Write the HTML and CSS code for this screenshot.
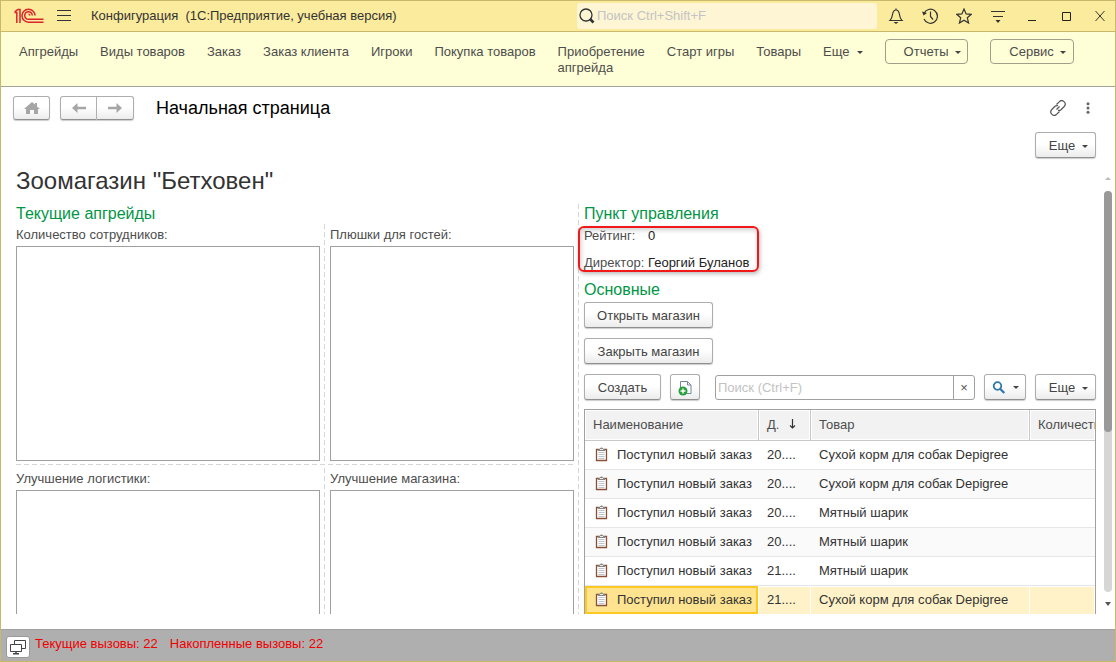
FILE: index.html
```html
<!DOCTYPE html>
<html lang="ru">
<head>
<meta charset="utf-8">
<title>Конфигурация</title>
<link rel="stylesheet" href="styles.css">
</head>
<body>
<div class="window">
  <header class="titlebar">
    <svg class="logo" width="30" height="16" viewBox="0 0 30 16" fill="none" stroke="#d9252b" stroke-width="1.500"><path d="M.5 4.500h2.300V15M.8 3.800L3.800 1.500H6V15"/><path d="M21 7.500A6.500 6.500 0 1 0 14.500 14.200H29.500"/><path d="M18.300 7.500A3.800 3.800 0 1 0 14.500 11.300H29.500"/><path d="M15.800 7.500a1.300 1.300 0 0 0-1.300-1.200"/></svg>
    <button class="icon-btn menu-btn" aria-label="Главное меню"><svg width="14" height="12" viewBox="0 0 14 12" stroke="#333" fill="none"><path d="M0 .5h14M0 5.500h14M0 10.500h14"/></svg></button>
    <span class="app-title">Конфигурация &nbsp;(1С:Предприятие, учебная версия)</span>
    <div class="global-search">
      <svg width="16" height="16" viewBox="0 0 16 16" fill="none" stroke="#333"><circle cx="7" cy="7" r="6" stroke-width="1.300"/><path d="M11 11l3.500 3.500" stroke-width="2.600"/></svg>
      <input type="text" aria-label="Поиск" placeholder="Поиск Ctrl+Shift+F">
    </div>
    <div class="tools">
      <button class="icon-btn" aria-label="Уведомления"><svg width="16" height="16" viewBox="0 0 16 16" fill="none" stroke="#333" stroke-width="1.200"><path d="M8 .5v1.500M2 12.500h12c-2-2-2-3-2.500-6C11 3.500 10 2 8 2S5 3.500 4.500 6.500C4 9.500 4 10.500 2 12.500z"/><path d="M5.500 14h5L8 16z" fill="#333" stroke="none"/></svg></button>
      <button class="icon-btn" aria-label="История"><svg width="16" height="16" viewBox="0 0 16 16" fill="none" stroke="#333" stroke-width="1.200"><path d="M2 5.500A7 7 0 1 1 2 11M8.500 3.500v5l2.500 3"/><path d="M0 3.500l1.500 4L5 5z" fill="#333" stroke="none"/></svg></button>
      <button class="icon-btn" aria-label="Избранное"><svg width="16" height="16" viewBox="0 0 16 16" fill="none" stroke="#333" stroke-width="1.200"><path d="M8 1l2.100 4.900 5.200.4-4 3.500 1.300 5.200L8 12.200 3.400 15l1.300-5.200-4-3.500 5.200-.4z"/></svg></button>
      <button class="icon-btn" aria-label="Настройка"><svg width="16" height="16" viewBox="0 0 16 16" fill="none" stroke="#333" stroke-width="1.200"><path d="M1 3.500h14M3 8.500h10"/><path d="M5.500 12h5L8 15z" fill="#333" stroke="none"/></svg></button>
      <button class="icon-btn" aria-label="Свернуть"><svg width="16" height="16" viewBox="0 0 16 16" stroke="#222" fill="none"><path d="M4 12.500h8"/></svg></button>
      <button class="icon-btn" aria-label="Развернуть"><svg width="16" height="16" viewBox="0 0 16 16" stroke="#222" fill="none"><path d="M4.500 4.500h8v8h-8z"/></svg></button>
      <button class="icon-btn" aria-label="Закрыть"><svg width="16" height="16" viewBox="0 0 16 16" stroke="#333" fill="none"><path d="M3.500 3l9 10M12.500 3l-9 10"/></svg></button>
    </div>
  </header>

  <nav class="sections">
    <a href="#">Апгрейды</a>
    <a href="#">Виды товаров</a>
    <a href="#">Заказ</a>
    <a href="#">Заказ клиента</a>
    <a href="#">Игроки</a>
    <a href="#">Покупка товаров</a>
    <a href="#">Приобретение<br>апгрейда</a>
    <a href="#">Старт игры</a>
    <a href="#">Товары</a>
    <button class="nav-more">Еще<i class="caret"></i></button>
    <button class="nav-menu">Отчеты<i class="caret"></i></button>
    <button class="nav-menu nav-menu-last">Сервис<i class="caret"></i></button>
  </nav>

  <div class="page-head">
    <button class="btn home" aria-label="Начальная страница"><svg width="16" height="14" viewBox="0 0 16 14" fill="#a6a6a6"><path d="M8 1L0 8h2v5h4V9h4v4h4V8h2l-3-2.600V2h-2v1.600z"/></svg></button>
    <div class="history">
      <button class="btn" aria-label="Назад"><svg width="16" height="12" viewBox="0 0 16 12" fill="#a6a6a6"><path d="M1 6l5.500-5v3.800H15v2.400H6.500V11z"/></svg></button>
      <button class="btn" aria-label="Вперед"><svg width="16" height="12" viewBox="0 0 16 12" fill="#a6a6a6"><path d="M15 6L9.500 1v3.800H1v2.400h8.500V11z"/></svg></button>
    </div>
    <h1>Начальная страница</h1>
    <button class="icon-btn link-btn" aria-label="Ссылка"><svg width="16" height="16" viewBox="0 0 16 16" fill="none" stroke="#555" stroke-width="1.200"><path d="M6.500 4.500l2.700-2.700a3.300 3.300 0 0 1 5 4.700L11 9.700c-1 .8-2 .9-3 .5M9.500 11.500l-2.700 2.700a3.300 3.300 0 0 1-5-4.700L5 6.300c1-.8 2-.9 3-.5M6.500 9.500l3-3"/></svg></button>
    <button class="icon-btn dots-btn" aria-label="Дополнительно"><svg width="4" height="12" viewBox="0 0 4 12" fill="#666"><circle cx="2" cy="1.700" r="1.500"/><circle cx="2" cy="6" r="1.500"/><circle cx="2" cy="10.300" r="1.500"/></svg></button>
  </div>
  <div class="commands"><button class="btn more">Еще<i class="caret"></i></button></div>

  <div class="viewport">
    <main class="content">
      <h2>Зоомагазин "Бетховен"</h2>
      <div class="columns">
        <section class="upgrades">
          <h3>Текущие апгрейды</h3>
          <div class="upgrade-row">
            <div class="field wide"><label for="staff">Количество сотрудников:</label><textarea id="staff"></textarea></div>
            <div class="field"><label for="bonus">Плюшки для гостей:</label><textarea id="bonus"></textarea></div>
          </div>
          <div class="row-divider"></div>
          <div class="upgrade-row">
            <div class="field wide"><label for="logistics">Улучшение логистики:</label><textarea id="logistics"></textarea></div>
            <div class="field"><label for="shop">Улучшение магазина:</label><textarea id="shop"></textarea></div>
          </div>
        </section>
        <section class="control">
          <h3>Пункт управления</h3>
          <dl class="facts">
            <dt>Рейтинг:</dt><dd>0</dd>
            <dt>Директор:</dt><dd>Георгий Буланов</dd>
          </dl>
          <h3>Основные</h3>
          <div class="actions">
            <button class="btn">Открыть магазин</button>
            <button class="btn">Закрыть магазин</button>
          </div>
          <div class="list-bar">
            <button class="btn create">Создать</button>
            <button class="btn copy" aria-label="Скопировать"><svg width="14" height="16" viewBox="0 0 14 16" fill="none"><path d="M2.500 9V1.500h7l3.500 3.500v8.500H8" fill="#fff" stroke="#75879b"/><path d="M9.500 1.500V5H13" stroke="#75879b"/><circle cx="5" cy="11" r="4.500" fill="#28a03c"/><path d="M2.500 11h5M5 8.500v5" stroke="#fff" stroke-width="1.400"/></svg></button>
            <div class="list-search">
              <input type="text" aria-label="Поиск в списке" placeholder="Поиск (Ctrl+F)">
              <button aria-label="Очистить">×</button>
            </div>
            <button class="btn find" aria-label="Найти"><svg width="14" height="14" viewBox="0 0 14 14" fill="none" stroke="#3178ad"><circle cx="5.500" cy="5" r="3.800" stroke-width="1.800"/><path d="M8.300 8l4 4" stroke-width="2.300"/></svg><i class="caret"></i></button>
            <button class="btn more">Еще<i class="caret"></i></button>
          </div>
          <div class="table-box">
            <table>
              <colgroup><col class="c-name"><col class="c-date"><col class="c-goods"><col></colgroup>
              <thead><tr><th>Наименование</th><th>Д. <svg class="sort" width="7" height="10" viewBox="0 0 7 10" fill="none" stroke="#333" stroke-width="1.200"><path d="M3.500 0v9M1 6.500L3.500 9 6 6.500"/></svg></th><th>Товар</th><th>Количество</th></tr></thead>
              <tbody>
                <tr><td><svg class="doc"><use href="#clip"/></svg>Поступил новый заказ</td><td>20....</td><td>Сухой корм для собак Depigree</td><td></td></tr>
                <tr><td><svg class="doc"><use href="#clip"/></svg>Поступил новый заказ</td><td>20....</td><td>Сухой корм для собак Depigree</td><td></td></tr>
                <tr><td><svg class="doc"><use href="#clip"/></svg>Поступил новый заказ</td><td>20....</td><td>Мятный шарик</td><td></td></tr>
                <tr><td><svg class="doc"><use href="#clip"/></svg>Поступил новый заказ</td><td>20....</td><td>Мятный шарик</td><td></td></tr>
                <tr><td><svg class="doc"><use href="#clip"/></svg>Поступил новый заказ</td><td>21....</td><td>Мятный шарик</td><td></td></tr>
                <tr class="selected"><td><svg class="doc"><use href="#clip"/></svg>Поступил новый заказ</td><td>21....</td><td>Сухой корм для собак Depigree</td><td></td></tr>
              </tbody>
            </table>
          </div>
        </section>
      </div>
    </main>
    <div class="scrollbar"><i class="up"></i><div class="track"><div class="thumb"></div></div><i class="down"></i></div>
  </div>

  <footer class="status">
    <button class="windows-btn" aria-label="Окна"><svg width="18" height="16" viewBox="0 0 18 16" fill="#fff" stroke="#444"><path d="M5.500 1.500h11v8h-11z"/><path d="M1.500 5.500h11v7h-11z"/><path d="M7 12.500V15M4 14.700h6" stroke-width="1.500"/></svg></button>
    <span>Текущие вызовы: 22</span><span>Накопленные вызовы: 22</span>
  </footer>
</div>
<svg class="defs" width="0" height="0"><symbol id="clip" viewBox="0 0 13 15"><path d="M1.500 2.500h10v11h-10z" fill="#fff" stroke="#8a4f35" stroke-width="1.300"/><path d="M3.500 5.500h6M3.500 7.500h6M3.500 9.500h6M3.500 11.500h6" stroke="#bcc5cf"/><path d="M3 4V2h2c0-2 3-2 3 0h2v2z" fill="#858585"/><path d="M5 2.500h3" stroke="#eee"/></symbol></svg>
</body>
</html>
```

FILE: styles.css
```css
* { box-sizing: border-box; }
body { margin: 0; font: 13px/16px "Liberation Sans", Arial, sans-serif; color: #333; }
button, input, textarea { font: inherit; color: inherit; margin: 0; }
button { padding: 0; border: 0; background: none; white-space: nowrap; }
svg { display: block; flex: none; }
h1, h2, h3, dl, dd { margin: 0; font-weight: normal; }
.defs { position: absolute; }

.window { height: 100vh; display: flex; flex-direction: column; border: 1px solid #c9b86b; background: #fff; overflow: hidden; }

.titlebar { flex: none; display: flex; align-items: center; height: 31px; padding: 0 7px 0 13px; background: #fbeb9d; border-bottom: 1px solid #c9b86b; }
.icon-btn { display: flex; align-items: center; justify-content: center; }
.menu-btn { margin: 0 20px 0 13px; }
.app-title { flex: 1; }
.global-search { display: flex; align-items: center; width: 300px; height: 26px; padding-left: 2px; background: #fdf5d4; border-radius: 3px; }
.global-search input { flex: 1; min-width: 0; border: 0; padding: 0 2px; background: none; outline: 0; }
input::placeholder { color: #c3c3c3; opacity: 1; }
.tools { display: flex; gap: 18px; margin-left: 11px; }

.sections { flex: none; display: flex; align-items: flex-start; gap: 22px; height: 55px; padding: 12px 18px 0; background: #ffffd7; border-bottom: 1px solid #a3a39a; color: #4d4d4d; }
.sections a { color: inherit; text-decoration: none; white-space: nowrap; }
.caret { display: inline-block; border: 3px solid transparent; border-top-color: #444; border-bottom: 0; margin-left: 7px; vertical-align: 2px; }
.nav-menu { width: 83px; height: 25px; margin-top: -5px; padding-left: 12px; border: 1px solid #a0a088; border-radius: 4px; }
.nav-menu .caret { margin-left: 6px; }
.nav-menu-last { width: 84px; }

.btn { height: 26px; padding-top: 1px; border: 1px solid #adadad; border-bottom-color: #8f8f8f; border-radius: 3px; background: linear-gradient(#fff 45%, #ececec); box-shadow: 0 1px 1px #ccc; color: #444; }
.btn:has(svg) { display: flex; align-items: center; justify-content: center; }
.page-head { flex: none; display: flex; align-items: center; height: 41px; padding: 0 25px 0 12px; }
.page-head .btn { width: 37px; height: 24px; }
.history { display: flex; margin: 0 22px 0 10px; }
.history .btn:first-child { border-radius: 3px 0 0 3px; }
.history .btn:last-child { border-radius: 0 3px 3px 0; border-left: 0; }
h1 { flex: 1; font-size: 18px; line-height: 22px; color: #000; }
.dots-btn { margin-left: 20px; }
.commands { flex: none; display: flex; justify-content: flex-end; padding: 4px 19px 3px; }
.more { width: 61px; padding-left: 6px; }

.viewport { flex: 1; min-height: 0; display: flex; margin-bottom: 15px; }
.content { flex: 1; min-width: 0; overflow: hidden; padding: 4px 8px 0 15px; }
h2 { font-size: 24px; line-height: 32px; }
h3 { font-size: 16px; line-height: 20px; color: #009646; }
.columns { display: flex; margin-top: 7px; }
.upgrades { flex: 563; min-width: 0; }
.upgrades, .upgrade-row .wide { --dash: repeating-linear-gradient(#d6d6d6 0 5px, transparent 5px 8px); background: var(--dash) right top / 1px 100% no-repeat; }
.upgrade-row { display: flex; gap: 5px; padding-right: 5px; }
.field { flex: 244; min-width: 0; padding-top: 3px; color: #4d4d4d; }
.field.wide { flex: 304; padding-right: 5px; }
.field label { display: block; height: 19px; }
.field textarea { display: block; width: 100%; height: 215px; border: 1px solid #a0a0a0; background: #fff; resize: none; outline: 0; }
.row-divider { height: 5px; margin: 2px 5px 0 0; background: repeating-linear-gradient(90deg, #d6d6d6 0 5px, transparent 5px 8px) left 1px / 100% 1px no-repeat; }

.control { flex: 512; min-width: 0; padding-left: 5px; }
.facts { position: relative; display: grid; grid-template-columns: 59px 1fr; column-gap: 5px; row-gap: 11px; padding: 4px 0 9px; }
.facts dt { color: #4d4d4d; white-space: nowrap; }
.facts dd { color: #222; }
.facts::after { content: ""; position: absolute; box-sizing: border-box; left: -6px; top: 2px; width: 181px; height: 46px; border: 2px solid #f01818; border-radius: 6px; box-shadow: 1px 2px 4px #0004, inset 1px 2px 5px #0003; }
.actions { display: flex; flex-direction: column; align-items: flex-start; gap: 10px; padding: 2px 0 10px; }
.actions .btn { width: 129px; }
.list-bar { display: flex; }
.create { width: 77px; }
.copy { width: 30px; margin: 0 15px 0 9px; }
.list-search { flex: 1; min-width: 0; display: flex; height: 25px; margin: 1px 9px 0 0; border: 1px solid #a0a0a0; border-radius: 3px; }
.list-search input { flex: 1; min-width: 0; padding: 0 2px; border: 0; outline: 0; background: none; }
.list-search button { width: 21px; border-left: 1px solid #a0a0a0; color: #555; }
.find { width: 42px; margin-right: 9px; }

.table-box { margin-top: 9px; border: 1px solid #a0a0a0; overflow: hidden; }
table { width: 100%; table-layout: fixed; border-collapse: separate; border-spacing: 0; }
.c-name { width: 174px; }
.c-date { width: 52px; }
.c-goods { width: 219px; }
th, td { padding: 0 0 0 8px; text-align: left; white-space: nowrap; overflow: hidden; font-weight: normal; }
th { height: 31px; background: #f2f2f2; color: #4d4d4d; border-right: 1px solid #c8c8c8; border-bottom: 1px solid #c8c8c8; box-shadow: inset 0 0 0 1px #fff; }
th:last-child { border-right: 0; }
td { height: 29px; border-bottom: 1px solid #e6e6e6; }
tr:nth-child(even) td { background: #fafafa; }
.sort { display: inline-block; margin-left: 6px; }
.doc { display: inline-block; width: 13px; height: 15px; margin: 0 9px 0 2px; vertical-align: -3px; }
tbody .selected td { background: #fff2c8; border-right: 1px solid #fff; border-bottom-color: #fff; box-shadow: inset 0 1px #fff; }
tbody .selected td:first-child { background: #fee391; box-shadow: inset 0 0 0 2px #fbc921; }

.scrollbar { flex: none; width: 8px; margin: 16px 3px 8px 0; display: flex; flex-direction: column; align-items: center; }
.track { flex: 1; width: 8px; margin: 11px 0 10px; border-radius: 4px; background: #d6d6d6; }
.thumb { height: 60%; border-radius: 4px; background: #999; }
.up { border: 3px solid transparent; border-bottom-color: #bbb; border-top: 0; }
.down { border: 3px solid transparent; border-top: 4px solid #555; border-bottom: 0; }

.status { flex: none; display: flex; gap: 12px; height: 32px; padding: 6px 5px 0; background: #afafaf; border-top: 1px solid #a0a0a0; color: #f00000; }
.windows-btn { display: flex; align-items: center; justify-content: center; width: 24px; height: 22px; margin-right: -7px; border: 1px solid #999; border-radius: 3px; background: #fff; }
```
